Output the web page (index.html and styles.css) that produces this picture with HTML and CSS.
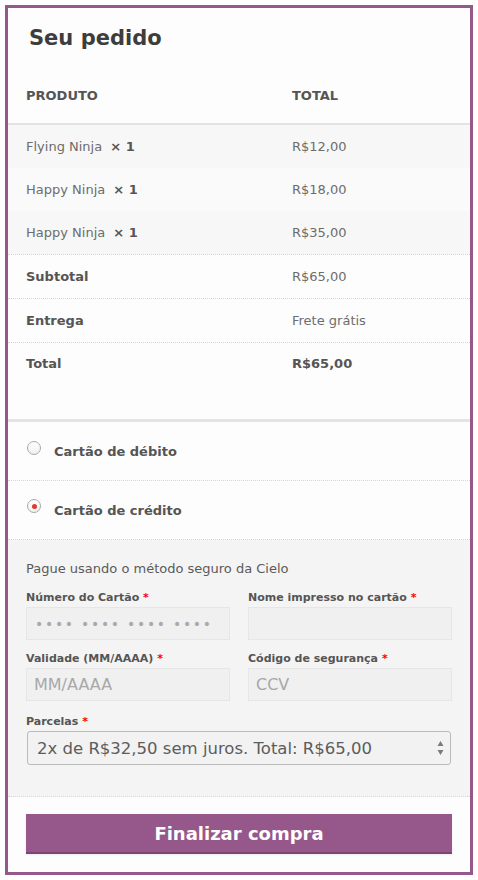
FILE: index.html
```html
<!DOCTYPE html>
<html lang="pt-BR">
<head>
  <meta charset="UTF-8">
  <meta name="viewport" content="width=device-width, initial-scale=1.0">
  <title>Seu pedido</title>
  <link rel="stylesheet" href="styles.css">
</head>
<body>
  <div class="checkout">
    <h3 class="title">Seu pedido</h3>

    <div class="review">
      <div class="row head"><span>Produto</span><span>Total</span></div>
      <div class="row item odd"><span>Flying Ninja <strong class="qty">× 1</strong></span><span>R$12,00</span></div>
      <div class="row item"><span>Happy Ninja <strong class="qty">× 1</strong></span><span>R$18,00</span></div>
      <div class="row item odd"><span>Happy Ninja <strong class="qty">× 1</strong></span><span>R$35,00</span></div>
      <div class="row sum"><strong>Subtotal</strong><span>R$65,00</span></div>
      <div class="row sum"><strong>Entrega</strong><span>Frete grátis</span></div>
      <div class="row sum total"><strong>Total</strong><strong>R$65,00</strong></div>
    </div>

    <ul class="methods">
      <li class="method"><span class="radio"></span><label>Cartão de débito</label></li>
      <li class="method"><span class="radio checked"></span><label>Cartão de crédito</label></li>
    </ul>

    <div class="payment-box">
      <p>Pague usando o método seguro da Cielo</p>
      <div class="fields">
        <div class="field">
          <label>Número do Cartão <abbr>*</abbr></label>
          <input class="input card" type="text" placeholder="•••• •••• •••• ••••">
        </div>
        <div class="field">
          <label>Nome impresso no cartão <abbr>*</abbr></label>
          <input class="input" type="text">
        </div>
        <div class="field">
          <label>Validade (MM/AAAA) <abbr>*</abbr></label>
          <input class="input" type="text" placeholder="MM/AAAA">
        </div>
        <div class="field">
          <label>Código de segurança <abbr>*</abbr></label>
          <input class="input" type="text" placeholder="CCV">
        </div>
        <div class="field wide">
          <label>Parcelas <abbr>*</abbr></label>
          <div class="select-wrap">
            <select class="select">
              <option>2x de R$32,50 sem juros. Total: R$65,00</option>
            </select>
            <span class="arrows">
              <svg width="7" height="16" viewBox="0 0 7 16"><path d="M3.5 1 L6.5 6 L0.5 6 Z" fill="#7a7a7a"/><path d="M0.5 10 L6.5 10 L3.5 15 Z" fill="#7a7a7a"/></svg>
            </span>
          </div>
        </div>
      </div>
    </div>

    <div class="place">
      <button class="btn" type="button">Finalizar compra</button>
    </div>
  </div>
</body>
</html>
```

FILE: styles.css
```css
* {
  margin: 0;
  padding: 0;
  box-sizing: border-box;
}
body {
  font-family: "DejaVu Sans", Verdana, sans-serif;
  font-size: 13px;
  color: #6d6d6d;
  background: #fff;
  padding: 5px;
}
.checkout {
  border: 3px solid #96588a;
  background: #fdfdfd;
  padding-bottom: 18px;
}
.title {
  font-size: 21px;
  line-height: 30px;
  font-weight: bold;
  color: #3d3d3d;
  padding: 15px 21px 0;
  margin-bottom: 13px;
}
.review {
  padding-bottom: 33px;
}
.row {
  display: grid;
  grid-template-columns: 266px 1fr;
  padding: 12px 18px 11px;
  line-height: 20px;
}
.row strong {
  color: #555;
}
.head {
  padding: 20px 18px 17px;
  border-bottom: 2px solid #e3e3e3;
  text-transform: uppercase;
  font-weight: bold;
  color: #555;
}
.item {
  background: #fafafa;
}
.item.odd {
  background: #f7f7f7;
}
.qty {
  margin-left: 4px;
}
.sum {
  border-top: 1px dotted #d6d6d6;
}
.total {
  padding-top: 11px;
  padding-bottom: 12px;
}
.methods {
  list-style: none;
  border-top: 3px solid #e4e4e4;
}
.method {
  display: flex;
  align-items: flex-start;
  padding: 20px 19px 18px;
  line-height: 20px;
  border-bottom: 1px dotted #d6d6d6;
}
.method label {
  font-weight: bold;
  color: #555;
  margin-left: 13px;
}
.radio {
  width: 14px;
  height: 14px;
  margin-top: -1px;
  border: 1px solid #a9a9a9;
  border-radius: 50%;
  background: linear-gradient(#fff, #f0f0f0);
  display: flex;
  align-items: center;
  justify-content: center;
  flex-shrink: 0;
}
.radio.checked::after {
  content: "";
  width: 5px;
  height: 5px;
  border-radius: 50%;
  background: #dd3b2c;
}
.method:last-child .radio {
  margin-top: -2px;
}
.payment-box {
  background: #f4f4f4;
  padding: 19px 18px 31px;
  border-bottom: 1px dotted #d6d6d6;
}
.payment-box p {
  line-height: 20px;
  color: #5a5a5a;
  margin-bottom: 10px;
}
.fields {
  display: grid;
  grid-template-columns: 1fr 1fr;
  column-gap: 18px;
  row-gap: 10px;
}
.field label {
  display: block;
  font-size: 11px;
  line-height: 14px;
  font-weight: bold;
  color: #555;
  padding-top: 2px;
  margin-bottom: 2px;
}
.field abbr {
  color: #f00;
  text-decoration: none;
}
.wide {
  grid-column: 1 / 3;
  margin-top: 2px;
}
.input {
  display: block;
  width: 100%;
  height: 33px;
  border: 0;
  background: #f0f0f0;
  box-shadow: inset 0 0 0 1px #e6e6e6;
  font-family: inherit;
  font-size: 16px;
  padding: 0 8px;
  color: #555;
  outline: none;
}
.input::placeholder {
  color: #a8a8a8;
}
.input.card {
  font-size: 14px;
  letter-spacing: 1.7px;
  padding-left: 9px;
}
.input.card::placeholder {
  color: #aaa;
}
.select-wrap {
  position: relative;
}
.select {
  display: block;
  height: 34px;
  border: 1px solid #bababa;
  border-radius: 3px;
  background: #f2f2f2;
  font-family: inherit;
  font-size: 16.5px;
  color: #5c5c5c;
  padding: 0 9px;
  -webkit-appearance: none;
  appearance: none;
  margin-left: 1px;
  width: calc(100% - 2px);
}
.arrows {
  position: absolute;
  right: 8px;
  top: 9px;
  display: flex;
}
.place {
  padding: 17px 18px 0;
}
.btn {
  display: block;
  width: 100%;
  height: 40px;
  border: 0;
  border-bottom: 2px solid #7d4573;
  background: #96588a;
  color: #fff;
  font-family: inherit;
  font-weight: bold;
  font-size: 18px;
  box-shadow: 0 1px 2px rgba(0, 0, 0, 0.08);
}
```
